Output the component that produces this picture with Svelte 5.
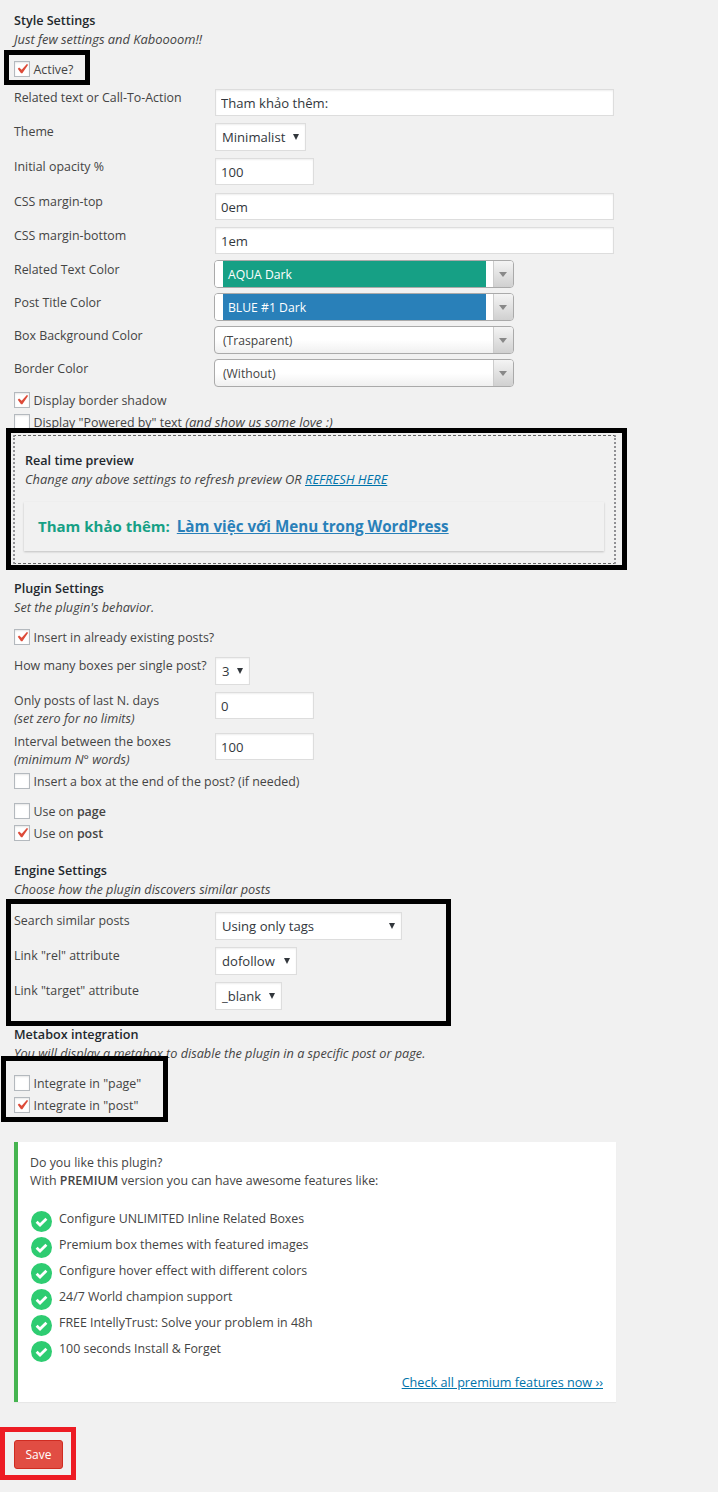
<script>
  const features = [
    'Configure UNLIMITED Inline Related Boxes',
    'Premium box themes with featured images',
    'Configure hover effect with different colors',
    '24/7 World champion support',
    'FREE IntellyTrust: Solve your problem in 48h',
    '100 seconds Install & Forget'
  ];
  const yes = 'M14.83 4.89l1.34.94-5.81 8.38H9.02L5.78 9.67l1.34-1.25 2.57 2.4z';
</script>

{#snippet check(on, text)}
  <div class="check">
    <span class="box">
      {#if on}
        <svg viewBox="0 0 20 20" width="20" height="20"><path d={yes} fill="#dd4b39" /></svg>
      {/if}
    </span>
    <span class="check-text">{@render text()}</span>
  </div>
{/snippet}

{#snippet chosen(label, color)}
  <div class="chosen">
    {#if color}
      <div class="swatch-wrap"><div class="swatch" style="background:{color}">{label}</div></div>
    {:else}
      <div class="plain">{label}</div>
    {/if}
    <div class="chosen-arrow"><i></i></div>
  </div>
{/snippet}

{#snippet pick(label, width)}
  <div class="pick" style="width:{width}px">{label}<i></i></div>
{/snippet}

{#snippet activeText()}Active?{/snippet}
{#snippet shadowText()}Display border shadow{/snippet}
{#snippet poweredText()}<span class="up">Display "Powered by" text <em>(and show us some love :)</em></span>{/snippet}
{#snippet insertText()}Insert in already existing posts?{/snippet}
{#snippet endText()}Insert a box at the end of the post? (if needed){/snippet}
{#snippet pageText()}Use on <b>page</b>{/snippet}
{#snippet postText()}Use on <b>post</b>{/snippet}
{#snippet intPage()}Integrate in "page"{/snippet}
{#snippet intPost()}Integrate in "post"{/snippet}

<div class="page">
  <h3>Style Settings</h3>
  <p class="sub loose">Just few settings and Kaboooom!!</p>

  <div class="m10">{@render check(true, activeText)}</div>

  <div class="rows first">
    <div class="row"><label for="cta">Related text or Call-To-Action</label><input id="cta" class="wide" value="Tham khảo thêm:" /></div>
    <div class="row"><span class="lab">Theme</span>{@render pick('Minimalist', 91)}</div>
    <div class="row plus"><label for="opa">Initial opacity %</label><input id="opa" class="short" value="100" /></div>
    <div class="row"><label for="mt">CSS margin-top</label><input id="mt" class="wide" value="0em" /></div>
    <div class="row minus"><label for="mb">CSS margin-bottom</label><input id="mb" class="wide" value="1em" /></div>
    <div class="row cs"><span class="lab">Related Text Color</span>{@render chosen('AQUA Dark', '#16a085')}</div>
    <div class="row cs"><span class="lab">Post Title Color</span>{@render chosen('BLUE #1 Dark', '#2980b9')}</div>
    <div class="row cs"><span class="lab">Box Background Color</span>{@render chosen('(Trasparent)')}</div>
    <div class="row cs"><span class="lab">Border Color</span>{@render chosen('(Without)')}</div>
  </div>

  {@render check(true, shadowText)}
  {@render check(false, poweredText)}

  <div class="preview">
    <h3>Real time preview</h3>
    <p class="sub loose">Change any above settings to refresh preview OR <a href="#top">REFRESH HERE</a></p>
    <div class="card">
      <span class="rel">Tham khảo thêm:</span>
      <a href="#top" class="post">Làm việc với Menu trong WordPress</a>
    </div>
  </div>

  <h3 class="gap14">Plugin Settings</h3>
  <p class="sub">Set the plugin's behavior.</p>

  <div class="m10">{@render check(true, insertText)}</div>

  <div class="rows">
    <div class="row"><span class="lab">How many boxes per single post?</span>{@render pick('3', 35)}</div>
    <div class="row two"><label for="days">Only posts of last N. days<br /><em>(set zero for no limits)</em></label><input id="days" class="short" value="0" /></div>
    <div class="row two last"><label for="inter">Interval between the boxes<br /><em>(minimum N° words)</em></label><input id="inter" class="short" value="100" /></div>
  </div>

  {@render check(false, endText)}
  <div class="m8">{@render check(false, pageText)}</div>
  {@render check(true, postText)}

  <h3 class="gap16">Engine Settings</h3>
  <p class="sub">Choose how the plugin discovers similar posts</p>

  <div class="rows engine">
    <div class="row"><span class="lab">Search similar posts</span>{@render pick('Using only tags', 187)}</div>
    <div class="row"><span class="lab">Link "rel" attribute</span>{@render pick('dofollow', 82)}</div>
    <div class="row"><span class="lab">Link "target" attribute</span>{@render pick('_blank', 67)}</div>
  </div>

  <h3 class="gap14">Metabox integration</h3>
  <p class="sub">You will display a metabox to disable the plugin in a specific post or page.</p>

  <div class="m10">{@render check(false, intPage)}</div>
  {@render check(true, intPost)}

  <div class="promo">
    <p>Do you like this plugin?<br />With <b>PREMIUM</b> version you can have awesome features like:</p>
    <ul>
      {#each features as f}
        <li>
          <svg viewBox="0 0 21 21" width="21" height="21">
            <circle cx="10.5" cy="10.5" r="10.5" fill="#2ecc71" />
            <path d="M5.6 10.8l3.4 3.3 6.4-6.4" fill="none" stroke="#fff" stroke-width="2.8" />
          </svg>
          <span>{f}</span>
        </li>
      {/each}
    </ul>
    <div class="more"><a href="#top">Check all premium features now ››</a></div>
  </div>

  <button class="save">Save</button>

  <!-- khung đánh dấu vẽ đè lên ảnh chụp -->
  <div class="mark m-active"></div>
  <div class="mark m-preview"></div>
  <div class="mark m-engine"></div>
  <div class="mark m-meta"></div>
  <div class="mark m-save"></div>
</div>

<style>
  :global(body) {
    margin: 0;
    background: #f1f1f1;
  }

  .page {
    position: relative;
    box-sizing: border-box;
    width: 718px;
    height: 1492px;
    padding: 10px 0 0 14px;
    font-family: "Open Sans", "Noto Sans", sans-serif;
    font-size: 12.4px;
    line-height: 18px;
    color: #444;
    overflow: hidden;
  }

  h3 {
    margin: 0;
    padding-top: 2px;
    font-size: 12.6px;
    line-height: 18px;
    font-weight: 600;
    color: #23282d;
  }

  .sub {
    margin: 0;
    font-size: 12.7px;
    font-style: italic;
    line-height: 18px;
  }

  .sub.loose {
    font-size: 12.9px;
  }

  a {
    color: #0073aa;
  }

  b {
    font-weight: 600;
  }

  .gap14 { margin-top: 14px; }
  .gap16 { margin-top: 16px; }
  .m10 { margin-top: 10px; }
  .m8 { margin-top: 8px; }

  /* checkbox */
  .check {
    display: flex;
    align-items: center;
    gap: 3.5px;
    height: 22px;
  }

  .check-text {
    padding-top: 2px;
  }

  .check-text em {
    font-size: 13.1px;
  }

  .up {
    display: block;
    margin-top: -2px;
  }

  .box {
    position: relative;
    box-sizing: border-box;
    width: 16px;
    height: 16px;
    background: #fff;
    border: 1px solid #b4b9be;
    box-shadow: inset 0 1px 2px rgba(0, 0, 0, .1);
  }

  .box svg {
    position: absolute;
    left: -3px;
    top: -3px;
  }

  /* hàng của form */
  .rows {
    display: flex;
    flex-direction: column;
    gap: 7px;
    margin-top: 9px;
  }

  .rows.first {
    margin-bottom: 4px;
  }

  .engine {
    margin-top: 14px;
  }

  .row {
    display: flex;
    align-items: flex-start;
    min-height: 27px;
  }

  .row.plus { margin-bottom: 1px; }
  .row.minus { margin-bottom: -1px; }
  .row.two { height: 34px; }
  .row.cs { margin-bottom: -2px; }
  .row.last { margin-bottom: 3px; }

  .row label,
  .row .lab {
    display: block;
    width: 201px;
    flex: none;
    line-height: 18px;
    white-space: nowrap;
  }

  .row.cs .lab {
    padding-top: 1px;
  }

  .row em {
    font-size: 12.6px;
  }

  input {
    box-sizing: border-box;
    height: 27px;
    padding: 3px 5px;
    font: inherit;
    font-size: 13.1px;
    color: #32373c;
    background: #fff;
    border: 1px solid #ddd;
    box-shadow: inset 0 1px 2px rgba(0, 0, 0, .07);
    outline: none;
  }

  .wide { width: 399px; }
  .short { width: 99px; }

  .pick {
    position: relative;
    box-sizing: border-box;
    height: 28px;
    padding: 0 6px;
    font-size: 13.1px;
    line-height: 27px;
    color: #32373c;
    background: #fff;
    border: 1px solid #ddd;
    box-shadow: inset 0 1px 2px rgba(0, 0, 0, .07);
  }

  .pick i {
    position: absolute;
    right: 6px;
    top: 10px;
    border-left: 3.5px solid transparent;
    border-right: 3.5px solid transparent;
    border-top: 6px solid #32373c;
  }

  /* select có màu */
  .chosen {
    display: flex;
    box-sizing: border-box;
    width: 300px;
    height: 28px;
    margin-left: -1px;
    background: linear-gradient(#fff 50%, #f0f0f0);
    border: 1px solid #aaa;
    border-radius: 4px;
    font-size: 12.2px;
    overflow: hidden;
  }

  .swatch-wrap {
    flex: 1;
    padding: 0 7px 0 8px;
    background: #fff;
  }

  .swatch {
    height: 100%;
    padding-left: 5px;
    line-height: 28px;
    color: #fff;
  }

  .plain {
    flex: 1;
    padding-left: 8px;
    line-height: 28px;
    color: #444;
  }

  .chosen-arrow {
    position: relative;
    width: 19px;
    background: linear-gradient(#f4f4f4, #d0d0d0);
    border-left: 1px solid #ccc;
  }

  .chosen-arrow i {
    position: absolute;
    left: 5px;
    top: 11px;
    border-left: 4px solid transparent;
    border-right: 4px solid transparent;
    border-top: 5px solid #888;
  }

  /* khung preview */
  .preview {
    box-sizing: border-box;
    width: 603px;
    height: 129px;
    margin: 2px 0 0 -1px;
    padding: 14px 10px 0;
    border: 1px dashed #666;
    border-left: 2px dotted #909094;
    border-right: 2px dotted #909094;
  }

  .card {
    height: 49px;
    margin: 14px 0 0 -1px;
    padding-left: 14px;
    line-height: 49px;
    font-size: 15px;
    font-weight: 700;
    background: #f1f1f1;
    box-shadow: 0 1px 2px rgba(0, 0, 0, .2);
  }

  .rel {
    color: #16a085;
    margin-right: 3px;
  }

  .post {
    font-size: 15.2px;
    color: #2980b9;
  }

  /* khung premium */
  .promo {
    box-sizing: border-box;
    width: 602px;
    height: 260px;
    margin-top: 26px;
    padding: 12px 13px 0 12px;
    background: #fff;
    border-left: 4px solid #46b450;
    box-shadow: 0 1px 1px rgba(0, 0, 0, .04);
  }

  .promo p {
    margin: 0;
  }

  ul {
    list-style: none;
    margin: 20px 0 0 1px;
    padding: 0;
  }

  li {
    display: flex;
    align-items: flex-start;
    gap: 7px;
    height: 26px;
  }

  li svg {
    margin-top: 1px;
    flex: none;
  }

  .more {
    margin-top: 7px;
    font-size: 12.65px;
    text-align: right;
  }

  .save {
    display: block;
    width: 49px;
    height: 29px;
    margin-top: 38px;
    padding: 0;
    font: inherit;
    font-size: 12px;
    color: #fff;
    background: #e14d43;
    border: 1px solid #d02c21;
    border-radius: 3px;
  }

  /* khung đánh dấu */
  .mark {
    position: absolute;
    box-sizing: border-box;
    border: 5px solid #000;
    pointer-events: none;
  }

  .m-active { left: 4px; top: 50px; width: 86px; height: 35px; }
  .m-preview { left: 6px; top: 428px; width: 621px; height: 142px; }
  .m-engine { left: 6px; top: 899px; width: 445px; height: 127px; }
  .m-meta { left: 1px; top: 1056px; width: 167px; height: 66px; }
  .m-save { left: 0; top: 1427px; width: 76px; height: 53px; border-color: #ed1c24; }
</style>
